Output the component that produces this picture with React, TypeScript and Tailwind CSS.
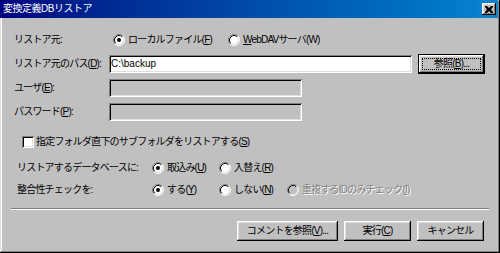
import React from 'react';

// classic 3D bevels
const sunken =
  'shadow-[inset_1px_1px_#808080,inset_-1px_-1px_#ffffff,inset_2px_2px_#000000,inset_-2px_-2px_#dfdfdf]';
const raised =
  'shadow-[inset_-1px_-1px_#000000,inset_1px_1px_#ffffff,inset_-2px_-2px_#808080,inset_2px_2px_#dfdfdf]';

const Mn = ({ children }: { children: React.ReactNode }) => <span className="underline underline-offset-1">{children}</span>;

const RadioMark = ({ checked = false, disabled = false }: { checked?: boolean; disabled?: boolean }) => (
  <svg width="12" height="12" viewBox="0 0 12 12" className="shrink-0">
    <circle cx="6" cy="6" r="5" fill={disabled ? '#c0c0c0' : '#ffffff'} />
    <path d="M2.11 9.89 A5.5 5.5 0 0 1 9.89 2.11" fill="none" stroke="#808080" strokeWidth="1" />
    <path d="M9.89 2.11 A5.5 5.5 0 0 1 2.11 9.89" fill="none" stroke="#ffffff" strokeWidth="1" />
    <path d="M2.82 9.18 A4.5 4.5 0 0 1 9.18 2.82" fill="none" stroke="#000000" strokeWidth="1" />
    <path d="M9.18 2.82 A4.5 4.5 0 0 1 2.82 9.18" fill="none" stroke="#dfdfdf" strokeWidth="1" />
    {checked && <circle cx="6" cy="6" r="2" fill="#000000" />}
  </svg>
);

const Radio = ({
  checked,
  disabled,
  width,
  children,
}: {
  checked?: boolean;
  disabled?: boolean;
  width?: string;
  children: React.ReactNode;
}) => (
  <div className={`flex items-center gap-[3px] ${width ?? ''}`}>
    <RadioMark checked={checked} disabled={disabled} />
    <span className={disabled ? 'text-[#808080] [text-shadow:1px_1px_0_#ffffff]' : ''}>{children}</span>
  </div>
);

const Button = ({ width, focused, children }: { width: string; focused?: boolean; children: React.ReactNode }) => (
  <div
    className={`${width} h-[20px] flex items-center justify-center bg-[#c0c0c0] ${focused ? 'border border-black' : ''} ${raised}`}
  >
    {focused ? (
      <span className="flex items-center justify-center w-[calc(100%-6px)] h-[calc(100%-6px)] border border-dotted border-black">
        {children}
      </span>
    ) : (
      children
    )}
  </div>
);

export default function App() {
  return (
    <div
      className={`w-[500px] h-[253px] bg-[#c0c0c0] flex flex-col text-[10px] leading-none tracking-[-0.8px] whitespace-nowrap text-black font-['Liberation_Sans','Noto_Sans_CJK_JP',sans-serif] shadow-[inset_-1px_-1px_#000000,inset_1px_1px_#dfdfdf,inset_-2px_-2px_#808080,inset_2px_2px_#ffffff]`}
    >
      {/* Title bar */}
      <div className="h-[18px] mr-[2px] flex items-center justify-between pl-[3px] pr-[2px] bg-gradient-to-r from-[#000080] to-[#1084d0]">
        <span className="text-white text-[10px] tracking-[-0.5px]">変換定義DBリストア</span>
        <div className={`w-[14px] h-[12px] bg-[#c0c0c0] flex items-center justify-center ${raised}`}>
          <svg width="8" height="7" viewBox="0 0 8 7">
            <path d="M0 0h2l2 2 2-2h2v1L6 3.5 8 6v1H6L4 5 2 7H0V6l2-2.5L0 1z" fill="#000000" />
          </svg>
        </div>
      </div>

      {/* リストア元 */}
      <div className="flex items-center h-[18px] mt-[13px] pl-[14px]">
        <span className="w-[99px]">リストア元:</span>
        <Radio checked width="w-[115px]">
          ローカルファイル(<Mn>F</Mn>)
        </Radio>
        <Radio>
          <Mn>W</Mn>ebDAVサーバ(W)
        </Radio>
      </div>

      {/* path */}
      <div className="flex items-center h-[20px] mt-[5px] pl-[14px]">
        <span className="w-[95px]">
          リストア元のパス(<Mn>D</Mn>):
        </span>
        <div className={`w-[303px] h-[18px] bg-white flex items-center px-[2px] tracking-normal ${sunken}`}>C:\backup</div>
        <div className="ml-[6px]">
          <Button width="w-[67px]" focused>
            参照(<Mn>B</Mn>)...
          </Button>
        </div>
      </div>

      {/* user */}
      <div className="flex items-center h-[18px] mt-[5px] pl-[14px]">
        <span className="w-[95px]">
          ユーザ(<Mn>E</Mn>):
        </span>
        <div className={`w-[193px] h-[18px] bg-[#c0c0c0] ${sunken}`} />
      </div>

      {/* password */}
      <div className="flex items-center h-[18px] mt-[6px] pl-[14px]">
        <span className="w-[95px]">
          パスワード(<Mn>P</Mn>):
        </span>
        <div className={`w-[193px] h-[18px] bg-[#c0c0c0] ${sunken}`} />
      </div>

      {/* checkbox */}
      <div className="flex items-center h-[18px] mt-[12px] pl-[22px] gap-[2px]">
        <div className={`w-[12px] h-[12px] bg-white ${sunken}`} />
        <span>
          指定フォルダ直下のサブフォルダをリストアする(<Mn>S</Mn>)
        </span>
      </div>

      {/* database */}
      <div className="flex items-center h-[18px] mt-[8px] pl-[17px]">
        <span className="w-[135px]">リストアするデータベースに:</span>
        <Radio checked width="w-[67px]">
          取込み(<Mn>U</Mn>)
        </Radio>
        <Radio>
          入替え(<Mn>R</Mn>)
        </Radio>
      </div>

      {/* check */}
      <div className="flex items-center h-[18px] mt-[4px] pl-[17px]">
        <span className="w-[135px]">整合性チェックを:</span>
        <Radio checked width="w-[67px]">
          する(<Mn>Y</Mn>)
        </Radio>
        <Radio width="w-[68px]">
          しない(<Mn>N</Mn>)
        </Radio>
        <Radio disabled>
          重複するIDのみチェック(<Mn>I</Mn>)
        </Radio>
      </div>

      {/* separator */}
      <div className="mx-[11px] mt-[9px] h-[2px] border-t border-t-[#808080] border-b border-b-white" />

      {/* buttons */}
      <div className="flex justify-end gap-[6px] pr-[16px] mt-[11px]">
        <Button width="w-[101px]">
          コメントを参照(<Mn>V</Mn>)...
        </Button>
        <Button width="w-[67px]">
          実行(<Mn>C</Mn>)
        </Button>
        <Button width="w-[67px]">キャンセル</Button>
      </div>
    </div>
  );
}
